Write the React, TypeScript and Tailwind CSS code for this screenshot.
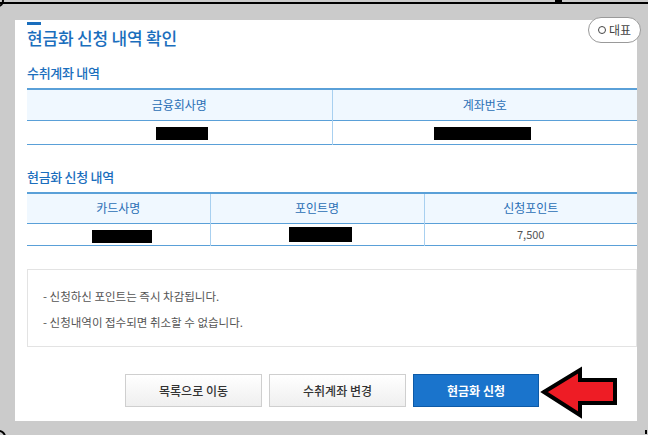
import React from "react";

const font = { fontFamily: '"Noto Sans CJK KR", "Noto Sans", sans-serif' };

function Redacted({ w, h }: { w: number; h: number }) {
  return <span className="inline-block bg-black align-middle" style={{ width: w, height: h }} />;
}

function SectionTitle({ children }: { children: React.ReactNode }) {
  return <h3 className="text-[13px] leading-[18px] font-medium text-[#1a6ebd] tracking-[-0.3px]">{children}</h3>;
}

function Arrow() {
  return (
    <svg className="absolute left-[539px] top-[364px]" width="82" height="56" viewBox="0 0 82 56">
      <polygon
        points="5,28 41,6 41,16 76,16 76,39 41,39 41,51"
        fill="#ee1c25"
        stroke="#000"
        strokeWidth="4"
        strokeLinejoin="miter"
      />
    </svg>
  );
}

export default function App() {
  return (
    <div className="relative w-[648px] h-[435px] overflow-hidden bg-[#cbcbcb]" style={font}>
      <div className="absolute left-0 top-[2px] w-full h-[2px] bg-black" />
      <div className="absolute left-[555px] top-0 w-[7px] h-[4px] bg-black" />
      <svg className="absolute left-0 top-0" width="10" height="12">
        <circle cx="-2" cy="1" r="5" fill="none" stroke="#000" strokeWidth="2" />
      </svg>
      <svg className="absolute left-0 bottom-0" width="10" height="10">
        <circle cx="-1" cy="12" r="6" fill="none" stroke="#000" strokeWidth="2" />
      </svg>
      <div className="absolute right-[1px] bottom-[1px] w-[2px] h-[4px] bg-black" />

      <div className="ml-[15px] mt-[20px] w-[622px] h-[401px] bg-white pl-[12px] flex flex-col">
        <div className="mt-[2px] w-[14px] h-[3px] bg-[#1a6ebd]" />
        <h2 className="mt-[1px] text-[17px] leading-[24px] font-medium text-[#1a6ebd] tracking-[-0.2px]">
          현금화 신청 내역 확인
        </h2>

        <div className="mt-[14px] mb-[6px]">
          <SectionTitle>수취계좌 내역</SectionTitle>
        </div>
        <table className="w-full border-collapse table-fixed text-[12px]">
          <thead>
            <tr className="bg-[#f0f8ff] h-[31px] border-t-2 border-b border-[#5aa0d8]">
              <th className="font-normal text-[#2a6fb5] w-[305px]">금융회사명</th>
              <th className="font-normal text-[#2a6fb5] border-l border-[#a8d0f0]">계좌번호</th>
            </tr>
          </thead>
          <tbody>
            <tr className="h-[24px] border-b border-[#5aa0d8]">
              <td className="text-center leading-none pt-[1px] pl-[5px]">
                <Redacted w={52} h={13} />
              </td>
              <td className="text-center leading-none pt-[1px] pr-[5px] border-l border-[#a8d0f0]">
                <Redacted w={97} h={13} />
              </td>
            </tr>
          </tbody>
        </table>

        <div className="mt-[23px] mb-[6px]">
          <SectionTitle>현금화 신청 내역</SectionTitle>
        </div>
        <table className="w-full border-collapse table-fixed text-[12px]">
          <thead>
            <tr className="bg-[#f0f8ff] h-[31px] border-t-2 border-b border-[#5aa0d8]">
              <th className="font-normal text-[#2a6fb5] w-[183px]">카드사명</th>
              <th className="font-normal text-[#2a6fb5] w-[214px] border-l border-[#a8d0f0]">포인트명</th>
              <th className="font-normal text-[#2a6fb5] border-l border-[#a8d0f0]">신청포인트</th>
            </tr>
          </thead>
          <tbody>
            <tr className="h-[22px] border-b border-[#5aa0d8]">
              <td className="text-center leading-none pt-[2px] pl-[8px]">
                <Redacted w={60} h={13} />
              </td>
              <td className="text-center leading-none pl-[6px] border-l border-[#a8d0f0]">
                <Redacted w={63} h={15} />
              </td>
              <td className="text-center text-[11px] text-[#555] border-l border-[#a8d0f0]">7,500</td>
            </tr>
          </tbody>
        </table>

        <div className="mt-[23px] h-[78px] border border-[#e3e3e3] pl-[15px] pt-[13px] text-[11.5px] leading-[26px] text-[#555]">
          <p>- 신청하신 포인트는 즉시 차감됩니다.</p>
          <p>- 신청내역이 접수되면 취소할 수 없습니다.</p>
        </div>

        <div className="mt-[27px] flex justify-center gap-[7px] text-[12px]">
          <button className="w-[137px] h-[33px] border border-[#cfcfcf] bg-gradient-to-b from-white to-[#efefef] text-[#333] font-medium">
            목록으로 이동
          </button>
          <button className="w-[137px] h-[33px] border border-[#cfcfcf] bg-gradient-to-b from-white to-[#efefef] text-[#333] font-medium">
            수취계좌 변경
          </button>
          <button className="w-[126px] h-[33px] border border-[#0d5aa7] bg-[#1a74cc] text-white font-bold">
            현금화 신청
          </button>
        </div>
      </div>

      <div className="absolute left-[588px] top-[17px] w-[53px] h-[26px] rounded-full border border-[#9a9a9a] bg-white flex items-center justify-center gap-[3px] text-[12px] text-[#444]">
        <span className="w-[8px] h-[8px] rounded-full border-[1.5px] border-[#444]" />
        <span>대표</span>
      </div>

      <Arrow />
    </div>
  );
}
